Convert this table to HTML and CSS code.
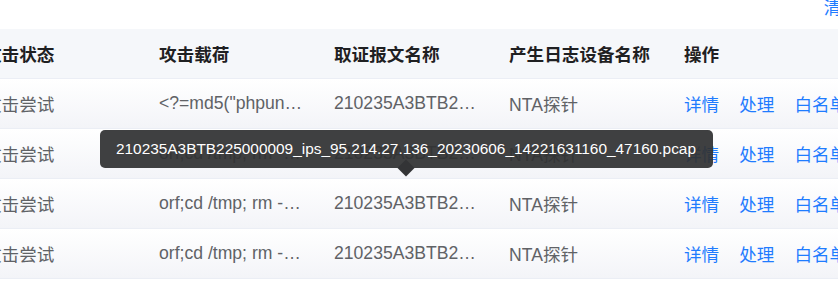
FILE: index.html
```html
<!DOCTYPE html>
<html lang="zh">
<head>
<meta charset="utf-8">
<link rel="stylesheet" href="styles.css">
</head>
<body>
<div class="page">
  <div class="toolbar"><span class="link">清空</span></div>
  <div class="table">
    <div class="row head">
      <div class="cell">攻击状态</div>
      <div class="cell">攻击载荷</div>
      <div class="cell">取证报文名称</div>
      <div class="cell">产生日志设备名称</div>
      <div class="cell">操作</div>
    </div>
    <div class="row">
      <div class="cell">攻击尝试</div>
      <div class="cell">&lt;?=md5("phpunit")?&gt;</div>
      <div class="cell">210235A3BTB225000009_ips_95.214.27.136_20230606.pcap</div>
      <div class="cell">NTA探针</div>
      <div class="cell ops"><span class="link">详情</span><span class="link">处理</span><span class="link">白名单</span></div>
    </div>
    <div class="row">
      <div class="cell">攻击尝试</div>
      <div class="cell">orf;cd /tmp; rm -rf *</div>
      <div class="cell">210235A3BTB225000009_ips_95.214.27.136_20230606_14221631160_47160.pcap</div>
      <div class="cell">NTA探针</div>
      <div class="cell ops"><span class="link">详情</span><span class="link">处理</span><span class="link">白名单</span></div>
    </div>
    <div class="row">
      <div class="cell">攻击尝试</div>
      <div class="cell">orf;cd /tmp; rm -rf *</div>
      <div class="cell">210235A3BTB225000009_ips_95.214.27.136.pcap</div>
      <div class="cell">NTA探针</div>
      <div class="cell ops"><span class="link">详情</span><span class="link">处理</span><span class="link">白名单</span></div>
    </div>
    <div class="row">
      <div class="cell">攻击尝试</div>
      <div class="cell">orf;cd /tmp; rm -rf *</div>
      <div class="cell">210235A3BTB225000009_ips_95.214.27.136.pcap</div>
      <div class="cell">NTA探针</div>
      <div class="cell ops"><span class="link">详情</span><span class="link">处理</span><span class="link">白名单</span></div>
    </div>
  </div>
  <div class="tooltip">210235A3BTB225000009_ips_95.214.27.136_20230606_14221631160_47160.pcap<span class="arrow"></span></div>
</div>
</body>
</html>
```

FILE: styles.css
```css
html, body {
  margin: 0;
  padding: 0;
  background: #ffffff;
}

.page {
  position: relative;
  width: 838px;
  height: 289px;
  overflow: hidden;
  font-family: "Liberation Sans", "Noto Sans CJK SC", sans-serif;
  font-size: 17.6px;
  color: #606266;
}

.toolbar {
  height: 29px;
  display: flex;
  justify-content: flex-end;
  align-items: flex-start;
  line-height: 17px;
}

.toolbar .link {
  margin-right: -21px;
}

.link {
  color: #1f7cff;
  white-space: nowrap;
}

.table {
  margin-left: -28px;
  width: 1100px;
}

.row {
  display: grid;
  grid-template-columns: 175px 175px 175px 175px 1fr;
  height: 50px;
  box-sizing: border-box;
  border-bottom: 1px solid #ebeef5;
  align-items: center;
  background: linear-gradient(to bottom, #ffffff, #f3f4f8);
}

.row.head {
  background: #f5f7fa;
  color: #1f2022;
  font-weight: bold;
}

.cell {
  padding: 0 17px 0 12px;
  white-space: nowrap;
  overflow: hidden;
  text-overflow: ellipsis;
}

.ops {
  display: flex;
  gap: 20px;
}

.tooltip {
  position: absolute;
  left: 100px;
  top: 130px;
  width: 613px;
  height: 38px;
  box-sizing: border-box;
  padding: 0 16px;
  border-radius: 5px;
  background: rgba(48, 49, 51, 0.93);
  color: #ffffff;
  font-size: 15.4px;
  line-height: 38px;
  white-space: nowrap;
}

.arrow {
  position: absolute;
  left: 300px;
  top: 32px;
  width: 12px;
  height: 12px;
  background: #333436;
  transform: rotate(45deg);
}
```
